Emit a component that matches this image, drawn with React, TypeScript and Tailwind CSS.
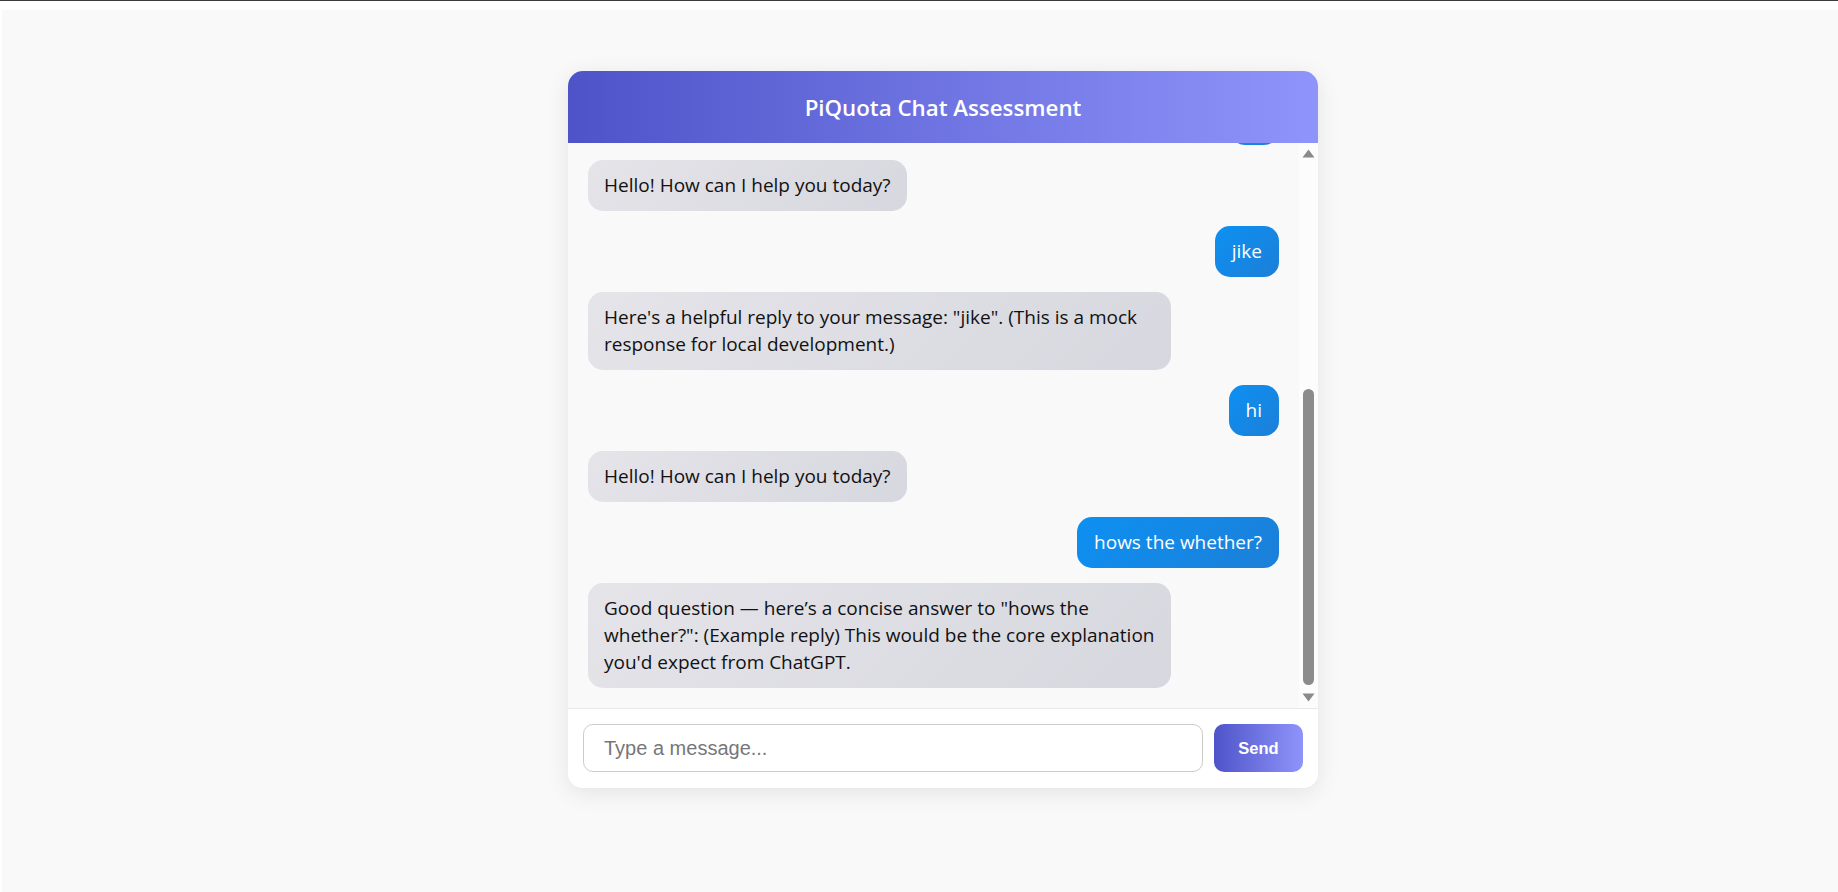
import React from "react";

type Msg = { role: "user" | "assistant"; lines: string[]; wide?: boolean };

const messages: Msg[] = [
  { role: "assistant", lines: ["Hello! How can I help you today?"] },
  { role: "user", lines: ["jike"] },
  {
    role: "assistant",
    lines: [
      "Here's a helpful reply to your message: \"jike\". (This is a mock",
      "response for local development.)",
    ],
    wide: true,
  },
  { role: "user", lines: ["hi"] },
  { role: "assistant", lines: ["Hello! How can I help you today?"] },
  { role: "user", lines: ["hows the whether?"] },
  {
    role: "assistant",
    lines: [
      "Good question \u2014 here\u2019s a concise answer to \"hows the",
      "whether?\": (Example reply) This would be the core explanation",
      "you'd expect from ChatGPT.",
    ],
    wide: true,
  },
];

function Bubble({ m }: { m: Msg }) {
  if (m.role === "user") {
    return (
      <div className="flex justify-end shrink-0">
        <div className="rounded-[15px] bg-[linear-gradient(135deg,#0d90f2,#1c7fd8)] px-[17px] py-[12px] text-[19px] leading-[27px] text-white whitespace-nowrap">
          {m.lines[0]}
        </div>
      </div>
    );
  }
  return (
    <div className="flex justify-start shrink-0">
      <div
        className={
          (m.wide ? "w-[583px] " : "") +
          "rounded-[15px] bg-[linear-gradient(135deg,#e4e4e9,#d7d7df)] px-[16px] py-[12px] text-[19px] leading-[27px] text-[#111111] whitespace-nowrap"
        }
      >
        {m.lines.map((l, i) => (
          <div key={i}>{l}</div>
        ))}
      </div>
    </div>
  );
}

export default function App() {
  return (
    <div className="min-h-screen bg-white border-t border-[#3a3a3a] pt-[9px] pl-[2px] font-['Open_Sans','Noto_Sans',sans-serif]">
      <div className="bg-[#f9f9f9] h-[882px] pt-[61px] pl-[566px]">
        <div className="w-[750px] h-[717px] rounded-[15px] bg-white shadow-[0_5px_25px_rgba(0,0,0,0.09)] flex flex-col overflow-hidden">
          <div className="h-[72px] shrink-0 flex items-center justify-center bg-[linear-gradient(90deg,#4e54c8,#8f94fb)]">
            <h1 className="text-white text-[22.3px] font-semibold translate-y-[1px]">PiQuota Chat Assessment</h1>
          </div>
          <div className="flex-1 min-h-0 flex bg-[#f9f9f9]">
            <div className="flex-1 min-w-0 overflow-hidden flex flex-col justify-end gap-[15px] px-[20px] pb-[20px]">
              <div className="flex justify-end shrink-0">
                <div className="w-[49px] h-[51px] rounded-[15px] bg-[linear-gradient(135deg,#0d90f2,#1c7fd8)]" />
              </div>
              {messages.map((m, i) => (
                <Bubble key={i} m={m} />
              ))}
            </div>
            <div className="w-[19px] shrink-0 bg-[#fcfcfc] flex flex-col items-center py-[6px]">
              <svg width="13" height="9" viewBox="0 0 13 9">
                <path d="M6.5 0.5 L12.5 8.5 L0.5 8.5 Z" fill="#8a8a8a" />
              </svg>
              <div className="flex-1 flex flex-col justify-end pb-[8px]">
                <div className="w-[11px] h-[296px] rounded-full bg-[#8b8b8b]" />
              </div>
              <svg width="13" height="9" viewBox="0 0 13 9">
                <path d="M0.5 0.5 L12.5 0.5 L6.5 8.5 Z" fill="#8a8a8a" />
              </svg>
            </div>
          </div>
          <div className="shrink-0 border-t border-[#e8e8e8] bg-white px-[15px] pt-[15px] pb-[16px] flex gap-[11px]">
            <input
              type="text"
              placeholder="Type a message..."
              className="flex-1 h-[48px] rounded-[10px] border border-[#cccccc] bg-white pl-[20px] pr-[12px] text-[20px] font-['Liberation_Sans',Arial,sans-serif] placeholder:text-[#777777] outline-none"
            />
            <button className="w-[89px] h-[48px] rounded-[10px] bg-[linear-gradient(90deg,#4e54c8,#8f94fb)] text-white text-[16.5px] font-bold font-['Liberation_Sans',Arial,sans-serif]">
              Send
            </button>
          </div>
        </div>
      </div>
    </div>
  );
}
